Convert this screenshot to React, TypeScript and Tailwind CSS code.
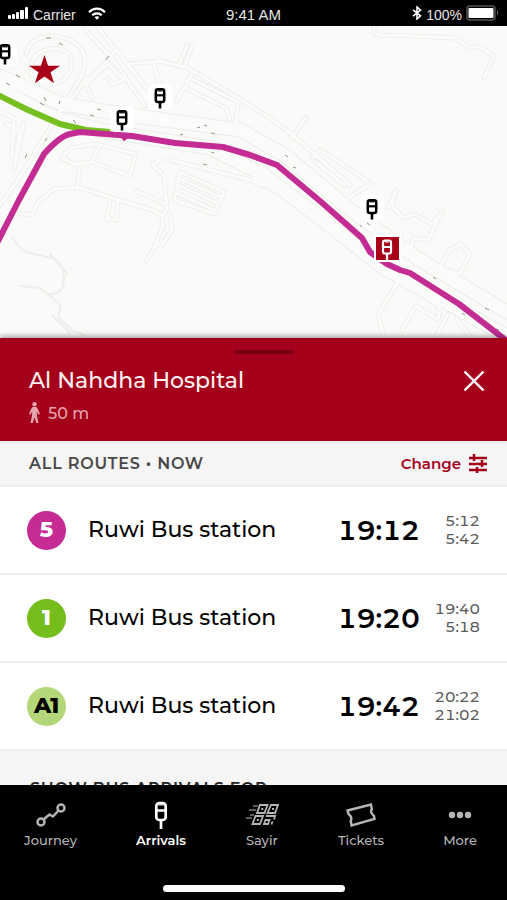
import React from 'react';

interface Arrival {
  route: string;
  badgeClass: string;
  destination: string;
  time: string;
  next: string[];
}

interface NavItem {
  label: string;
  icon: React.ReactNode;
  active?: boolean;
}

const arrivals: Arrival[] = [
  { route: '5', badgeClass: 'bg-[#c52b93] text-white', destination: 'Ruwi Bus station', time: '19:12', next: ['5:12', '5:42'] },
  { route: '1', badgeClass: 'bg-[#74bd1d] text-white', destination: 'Ruwi Bus station', time: '19:20', next: ['19:40', '5:18'] },
  { route: 'A1', badgeClass: 'bg-[#b3d778] text-black', destination: 'Ruwi Bus station', time: '19:42', next: ['20:22', '21:02'] },
];

const StatusBar: React.FC = () => (
  <header className="grid h-[26px] shrink-0 grid-cols-3 items-center bg-black px-2 font-['Liberation_Sans',Arial,sans-serif] text-[14px] leading-5 text-neutral-200">
    <div className="flex items-center">
      <svg width="21" height="13" viewBox="0 0 21 13" fill="#fff" className="mr-1" aria-hidden="true">
        <rect x="0" y="8" width="3" height="4" rx="1" />
        <rect x="4" y="7" width="3" height="5" rx="1" />
        <rect x="8" y="5" width="3" height="7" rx="1" />
        <rect x="12" y="3" width="4" height="9" rx="1" />
        <rect x="17" y="0" width="3" height="12" rx="1" />
      </svg>
      <span className="pt-1">Carrier</span>
      <svg width="18" height="13" viewBox="0 0 18 13" fill="none" stroke="#fff" strokeWidth="2.2" className="ml-3" aria-hidden="true">
        <path d="M1 5.2C5.5.5 12.5.5 17 5.2" />
        <path d="M4.2 8.3c2.7-2.7 6.9-2.7 9.6 0" />
        <path d="M6.6 10.2c1.3-1.2 3.5-1.2 4.8 0L9 12.7z" fill="#fff" stroke="none" />
      </svg>
    </div>
    <div className="pt-1 text-center text-[15px]">9:41 AM</div>
    <div className="flex items-center justify-end">
      <svg width="10" height="14" viewBox="0 0 10 14" fill="none" stroke="#fff" strokeWidth="1.6" className="mr-1" aria-hidden="true">
        <path d="M1 3.8l7.5 6L5 13V1l3.5 3.2L1 10.2" />
      </svg>
      <span className="pt-1">100%</span>
      <svg width="33" height="16" viewBox="0 0 33 16" className="ml-1" aria-hidden="true">
        <rect x="1" y="1" width="28" height="14" rx="3" fill="#000" stroke="#555" strokeWidth="1.5" />
        <rect x="2.500" y="3" width="25" height="10" rx="1" fill="#fff" />
        <path d="M31 5.5c1.6.8 1.6 4.2 0 5z" fill="#666" />
      </svg>
    </div>
  </header>
);

// x, y is the top centre of the sign
const BusStop: React.FC<{ x: number; y: number }> = ({ x, y }) => (
  <g transform={`translate(${x} ${y})`}>
    <rect x="-12" y="-4" width="24" height="26" rx="5" fill="#fff" />
    <rect x="-4.200" y="1.200" width="8.400" height="12.800" rx="2" fill="#fff" stroke="#000" strokeWidth="2.500" />
    <path d="M-4 7.300h8" stroke="#000" strokeWidth="2.200" />
    <path d="M-2.500 2.800h5" stroke="#000" strokeWidth="1.200" />
    <path d="M0 14v6.500" stroke="#000" strokeWidth="2.600" />
  </g>
);

const mainRoads = [
  'M0 76L62 104L110 112L150 118L240 130L286 156L350 210L420 260L507 312',
  'M0 90L50 116L100 130L210 148L262 174L320 218L384 268L507 336',
];

const roads = [
  'M26 54C30 36 52 32 70 40S88 66 78 82L20 177L0 205',
  'M32 76C26 58 44 44 62 50S72 82 52 84',
  'M84 28L115 62L145 106M98 28L126 62L158 103',
  'M64 110L84 82L102 66L115 51',
  'M126 64L160 61L188 68L238 98L270 118L290 133L350 185',
  'M178 66L188 44M184 67L192 46',
  'M154 64L162 92M176 102L192 74',
  'M92 98L86 84L108 64L124 80L112 84L108 78',
  'M186 88L226 108L230 120M190 78L238 102L236 124',
  'M100 145L136 154L130 176L92 162zM97 144L70 148L62 158L74 164L94 162',
  'M80 163L77 189M54 189L77 187L116 199L152 210L163 216L167 208L164 176L152 164L162 160',
  'M54 189L38 202L32 215L20 214M110 200L107 219L116 220L118 201',
  'M136 191L166 204M170 214L172 230L162 245L156 243L163 226L162 217M156 245L146 261',
  'M180 172L224 192L214 214L174 200zM178 178L220 197M178 185L217 203M176 193L214 210',
  'M170 160L250 180L262 186M262 166L275 178L330 222M268 176L328 216M260 170L253 178L300 205',
  'M292 138L306 118M312 158L320 150L360 176L370 184L348 198',
  'M316 162L345 186M388 208L396 190L392 206L404 218L414 214L432 224L442 212L428 240L414 238L410 250',
  'M450 250L460 244L470 254L460 274L440 268z',
  'M374 28C372 35 380 36 390 35L455 38L470 48L478 46L494 56L484 78',
  'M398 282L378 315L384 337M404 286L424 296L440 308L438 320L416 306L402 330M448 314L436 337M456 318L470 337',
  'M0 112L14 118L12 158M6 124L20 130L14 170M24 122L16 162',
];

const tracks = [
  'M12 237C20 250 26 254 40 255L55 259C62 266 64 270 64 277C64 292 58 294 48 294L40 288L20 286M48 294L61 306L58 317L72 330L84 335',
  'M50 254L67 273M53 316L70 333',
];

const RouteMap: React.FC = () => (
  <div className="h-[312px] shrink-0 overflow-hidden bg-[#fafaf8]">
    <svg viewBox="0 26 507 312" preserveAspectRatio="xMidYMid slice" className="block h-full w-full" role="img" aria-label="Route map">
      <g fill="none" strokeLinejoin="round" strokeLinecap="round">
        {mainRoads.map((d) => (
          <path key={d} d={d} stroke="#ececea" strokeWidth="15" />
        ))}
        {roads.map((d) => (
          <path key={d} d={d} stroke="#eeeeec" strokeWidth="5" />
        ))}
        {mainRoads.map((d) => (
          <path key={d} d={d} stroke="#fbfbfa" strokeWidth="13" />
        ))}
        {roads.map((d) => (
          <path key={d} d={d} stroke="#fbfbfa" strokeWidth="3" />
        ))}
        {tracks.map((d) => (
          <path key={d} d={d} stroke="#ededeb" strokeWidth="2" />
        ))}
      </g>
      <path
        d="M46 38h5M59 43l4 2M16 75l4 2M6 83l4 2M40 103l4 2M44 97l2 4M106 60l3-4M97 109l4 1M90 115l4 1M73 120l3 3M59 104l1-3M180 135l3-1M197 128l3-1M204 125l3 1M211 133l4 1M211 152l3 1M203 164l4 1M25 158l2-4M45 141l2-3M285 155l3 2M293 167l3 1M360 225l2 2M367 223l3 2M433 277l3 2M485 308l4 2M462 313l3 2M496 329l3 1"
        fill="none"
        stroke="#92928e"
        strokeWidth="1"
      />
      <g fill="none" strokeWidth="6" strokeLinejoin="round">
        <path d="M-4 94L26 109L60 124L86 130L110 132" stroke="#75bf21" />
        <path d="M-3 243L19 200L44 154Q60 136 70 134L80 132L132 136L175 143L223 147L250 155L277 165L320 201L362 238L370 252L387 264L400 270L410 273L459 304L507 341" stroke="#c32c93" />
        <path d="M121 136l3 4 6-4z" fill="#c32c93" stroke="#c32c93" strokeWidth="2" />
      </g>
      <path d="M44.500 55l3.600 10.700h12l-9.600 6.600 3.600 10.900-9.600-6.700-9.600 6.700 3.600-10.900-9.600-6.600h12z" fill="#a80018" />
      <BusStop x={5} y={44} />
      <BusStop x={122} y={110} />
      <BusStop x={160} y={88} />
      <BusStop x={372} y={199} />
      <rect x="374" y="235" width="27" height="27" fill="#fff" />
      <rect x="376" y="237" width="23" height="23" fill="#a80018" />
      <g stroke="#fff" fill="none" strokeWidth="2.200">
        <rect x="383" y="240.500" width="8" height="13" rx="2" />
        <path d="M383 247h8M387 254v7" />
        <path d="M385 242h4" strokeWidth="1" />
      </g>
    </svg>
  </div>
);

const StopHeader: React.FC = () => (
  <section className="relative flex h-[103px] shrink-0 items-start justify-between bg-[#a5001b] pr-[22px] pl-[29px] pt-7 shadow-[0_-2px_5px_rgba(0,0,0,0.35)]">
    <span className="absolute top-3 left-[52%] h-1 w-[60px] -translate-x-1/2 rounded-full bg-[#7c0014]" />
    <div>
      <h1 className="text-[22px] leading-[30px] font-medium text-[#fff2f2]">Al Nahdha Hospital</h1>
      <p className="mt-1 flex items-center gap-2 text-[16px] leading-6 font-medium text-[#e5a5ae]">
        <svg width="11" height="22" viewBox="0 0 11 22" fill="currentColor" aria-hidden="true">
          <circle cx="5.500" cy="2.200" r="2.200" />
          <path d="M3.500 5h4L9 7.200 11 12l-1.500.7-1.600-3V13l1.600 8H7.300L5.500 15.200 3.700 21H1.500L3.100 13V9.700l-1.600 3L0 12l2-4.800z" />
        </svg>
        <span className="pt-0.5">50 m</span>
      </p>
    </div>
    <button type="button" aria-label="Close" className="mt-1">
      <svg width="22" height="22" viewBox="0 0 22 22" fill="none" stroke="#fff" strokeWidth="2.400" aria-hidden="true">
        <path d="M1.500 1.500l19 19M20.500 1.500l-19 19" />
      </svg>
    </button>
  </section>
);

const ArrivalRow: React.FC<{ arrival: Arrival }> = ({ arrival }) => (
  <li className="flex h-[88px] items-center border-b-2 border-[#efefef] bg-white px-[27px]">
    <span className={`flex h-[39px] w-[39px] shrink-0 items-center justify-center rounded-full text-[22px] leading-6 font-extrabold ${arrival.badgeClass}`}>
      {arrival.route}
    </span>
    <span className="ml-[22px] flex-1 text-[22px] leading-8 font-medium text-black">{arrival.destination}</span>
    <span className="pt-0.5 text-[27px] leading-8 font-semibold text-black tabular-nums">{arrival.time}</span>
    <span className="w-[60px] text-right text-[15px] leading-[18px] font-medium text-[#5c5c5c] tabular-nums">
      {arrival.next.map((t) => (
        <span key={t} className="block">{t}</span>
      ))}
    </span>
  </li>
);

const navItems: NavItem[] = [
  {
    label: 'Journey',
    icon: (
      <svg width="30" height="24" viewBox="0 0 30 24" fill="none" stroke="currentColor" strokeWidth="2.500" aria-hidden="true">
        <circle cx="5" cy="19" r="3.500" />
        <circle cx="25" cy="5" r="3.500" />
        <path d="M7.500 16.500l6-5 3.500 2 5.500-6" strokeLinejoin="round" />
      </svg>
    ),
  },
  {
    label: 'Arrivals',
    active: true,
    icon: (
      <svg width="14" height="28" viewBox="0 0 14 28" fill="none" stroke="currentColor" strokeWidth="2.700" aria-hidden="true">
        <rect x="2.300" y="2" width="9.400" height="17" rx="3" />
        <path d="M2 9.500h10M7 19v9" />
        <path d="M4 3.800h6" strokeWidth="1.200" />
      </svg>
    ),
  },
  {
    label: 'Sayir',
    icon: (
      <svg width="34" height="24" viewBox="0 0 34 24" fill="none" stroke="currentColor" strokeWidth="1.800" aria-hidden="true">
        <path d="M15 2h7.500l-3 8H12zM26 2h7l-3 8h-7.500zM10.500 13H18l-3 8H7.500z" />
        <path d="M16.300 6h2M27 6h2M11.800 17h2M21 13h9l-1 3.500M20.500 17h4l-1.500 4h-4zM27.500 18.500l-1 3" />
        <path d="M8 3h5M4 7h7M5 12h4M1 15h6" strokeWidth="1" />
      </svg>
    ),
  },
  {
    label: 'Tickets',
    icon: (
      <svg width="30" height="24" viewBox="0 0 30 24" fill="none" stroke="currentColor" strokeWidth="2.400" aria-hidden="true">
        <path d="M1.500 7.500L25 1.500l.8 4.500c-1.600 3-.6 5 2.200 7l.5 3L5.500 22.500l-.8-4.500c1.500-3 .5-5-2.200-7z" />
      </svg>
    ),
  },
  {
    label: 'More',
    icon: (
      <svg width="24" height="8" viewBox="0 0 24 8" fill="currentColor" aria-hidden="true">
        <circle cx="4" cy="4" r="3.200" />
        <circle cx="12" cy="4" r="3.200" />
        <circle cx="20" cy="4" r="3.200" />
      </svg>
    ),
  },
];

const BottomNav: React.FC = () => (
  <nav className="flex h-[115px] shrink-0 flex-col items-center justify-between bg-black pb-2">
    <ul className="flex w-full justify-between pt-4 pr-[30px] pl-6">
      {navItems.map((item) => (
        <li key={item.label}>
          <a href="#" className={`flex flex-col items-center text-[13px] leading-5 ${item.active ? 'font-semibold text-white' : 'font-medium text-[#b5b5b5]'}`}>
            <span className="mb-px flex h-7 items-center justify-center">{item.icon}</span>
            <span>{item.label}</span>
          </a>
        </li>
      ))}
    </ul>
    <span className="h-[7px] w-[182px] rounded-full bg-white" />
  </nav>
);

const App: React.FC = () => {
  return (
    <div className="flex h-screen flex-col overflow-hidden bg-[#f5f5f5] font-['Montserrat','Inter',sans-serif]">
      <StatusBar />
      <RouteMap />
      <StopHeader />
      <main className="min-h-0 flex-1 overflow-hidden">
        <div className="flex h-[46px] items-center justify-between border-b-2 border-[#ededed] pt-0.5 pr-5 pl-[29px]">
          <h2 className="text-[16px] leading-6 font-semibold tracking-wider text-[#484848]">ALL ROUTES • NOW</h2>
          <button type="button" className="flex items-center gap-2 text-[15px] leading-6 font-semibold text-[#a5001b]">
            Change
            <svg width="18" height="20" viewBox="0 0 18 20" fill="none" stroke="currentColor" strokeWidth="2.500" aria-hidden="true">
              <path d="M0 4h18M0 10h18M0 16h18M5 0v7M13 6v7M8 13v6" />
            </svg>
          </button>
        </div>
        <ul>
          {arrivals.map((arrival) => (
            <ArrivalRow key={arrival.route} arrival={arrival} />
          ))}
        </ul>
        <h2 className="px-[30px] pt-[26px] text-[16px] leading-6 font-semibold tracking-wider text-[#222]">SHOW BUS ARRIVALS FOR</h2>
      </main>
      <BottomNav />
    </div>
  );
};

export default App;
